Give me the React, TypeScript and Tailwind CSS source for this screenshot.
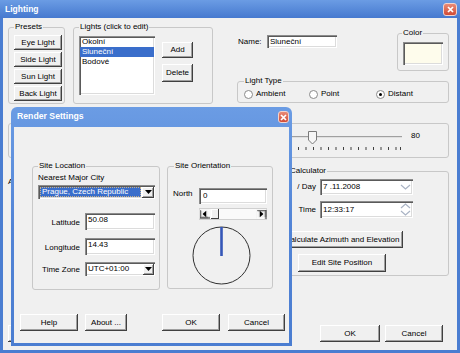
import React from "react";

const FONT = "font-['Liberation_Sans',Arial,sans-serif]";

function Btn({ children, className = "" }: { children?: React.ReactNode; className?: string }) {
  return (
    <button
      type="button"
      className={`flex shrink-0 items-center justify-center bg-[#f0f0f0] text-[8px] leading-none text-black shadow-[inset_-1px_-1px_0_#404040,inset_1px_1px_0_#ffffff,inset_-2px_-2px_0_#a0a0a0] ${className}`}
    >
      {children}
    </button>
  );
}

function Field({ children, className = "" }: { children?: React.ReactNode; className?: string }) {
  return (
    <div
      className={`shrink-0 overflow-hidden shadow-[inset_1px_1px_0_#8c8c8c,inset_2px_2px_0_#5a5a5a,inset_-1px_-1px_0_#ffffff,inset_-2px_-2px_0_#dcdcdc] ${className}`}
    >
      {children}
    </div>
  );
}

function Group({
  label,
  className = "",
  legendClass = "",
  children,
}: {
  label: string;
  className?: string;
  legendClass?: string;
  children?: React.ReactNode;
}) {
  return (
    <fieldset className={`shrink-0 rounded-[3px] border border-[#c8c8c8] ${className}`}>
      <legend className={`px-[1px] text-[8px] leading-[12px] ${legendClass}`}>{label}</legend>
      {children}
    </fieldset>
  );
}

function Close({ className = "" }: { className?: string }) {
  return (
    <div
      className={`flex items-center justify-center rounded-[3px] border border-[#f3d3cc] bg-gradient-to-b from-[#e98a76] to-[#cf4a36] ${className}`}
    >
      <svg width="7" height="7" viewBox="0 0 7 7">
        <path d="M1 1L6 6M6 1L1 6" stroke="white" strokeWidth="1.7" />
      </svg>
    </div>
  );
}

function Radio({ label, checked = false, className = "" }: { label: string; checked?: boolean; className?: string }) {
  return (
    <div className={`flex items-center ${className}`}>
      <span className="flex h-[9px] w-[9px] items-center justify-center rounded-full border border-[#8a8a8a] bg-white">
        {checked && <span className="h-[3px] w-[3px] rounded-full bg-black" />}
      </span>
      <span className="ml-[3px]">{label}</span>
    </div>
  );
}

function DropBtn({ className = "" }: { className?: string }) {
  return (
    <div
      className={`flex items-center justify-center bg-[#f0f0f0] shadow-[inset_-1px_-1px_0_#404040,inset_1px_1px_0_#ffffff,inset_-2px_-2px_0_#a0a0a0] ${className}`}
    >
      <svg width="7" height="4" viewBox="0 0 7 4">
        <path d="M0 0H7L3.5 4Z" fill="black" />
      </svg>
    </div>
  );
}

function Chevron({ up = false }: { up?: boolean }) {
  return (
    <svg width="11" height="6" viewBox="0 0 11 6">
      <path d={up ? "M1 5L5.5 1L10 5" : "M1 1L5.5 5L10 1"} stroke="#a9b3c4" strokeWidth="1.2" fill="none" />
    </svg>
  );
}

const ticks: number[] = [];
for (let x = 298 - 7.5 * 37; x < 397; x += 7.5) ticks.push(x);
ticks.push(400);

function RenderSettings() {
  return (
    <div className="absolute left-[11px] top-[107px] flex h-[239px] w-[281px] flex-col rounded-t-[6px] bg-gradient-to-b from-[#6b9ce4] via-[#5284d6] to-[#4a7dd1] px-[3px] pb-[3px]">
      <div className="flex h-[20px] items-center justify-between pl-[3px]">
        <span className="text-[8.7px] font-bold text-white">Render Settings</span>
        <Close className="h-[12px] w-[11px]" />
      </div>
      <div className="flex-1 bg-[#f0f0f0] text-[8px] text-black">
        <div className="flex items-start pl-[18px] pt-[33px]">
          <Group label="Site Location" className="h-[130px] w-[128px]" legendClass="ml-[5px]">
            <div className="pl-[5px] leading-[12px]">Nearest Major City</div>
            <Field className="ml-[5px] mt-[1px] flex h-[14px] w-[117px] items-center bg-white pl-[2px] pr-[1px]">
              <span className="h-[10px] w-[101px] border border-dotted border-[#c9b28a] bg-[#3a6ecb] pl-[1px] leading-[8px] text-white">
                Prague, Czech Republic
              </span>
              <DropBtn className="ml-[1px] h-[11px] w-[12px]" />
            </Field>
            <div className="mt-[14px] flex items-center">
              <span className="flex w-[47px] justify-end pt-[3px]">Latitude</span>
              <Field className="ml-[5px] h-[17px] w-[70px] bg-white pl-[3px] pt-[2px] leading-[10px]">50.08</Field>
            </div>
            <div className="mt-[8px] flex items-center">
              <span className="flex w-[47px] justify-end pt-[3px]">Longitude</span>
              <Field className="ml-[5px] h-[17px] w-[70px] bg-white pl-[3px] pt-[2px] leading-[10px]">14.43</Field>
            </div>
            <div className="mt-[7px] flex items-center">
              <span className="flex w-[47px] justify-end whitespace-nowrap pt-[1px]">Time Zone</span>
              <Field className="ml-[5px] flex h-[14px] w-[70px] items-center justify-between bg-white pl-[3px] pr-[1px]">
                <span className="leading-[10px]">UTC+01:00</span>
                <DropBtn className="h-[11px] w-[11px]" />
              </Field>
            </div>
          </Group>
          <Group label="Site Orientation" className="ml-[7px] h-[129px] w-[106px]" legendClass="ml-[6px]">
            <div className="mt-[16px] flex items-start">
              <span className="w-[31px] pl-[5px] pt-[1px] leading-[10px]">North</span>
              <Field className="h-[16px] w-[68px] bg-white pl-[4px] pt-[3px] leading-[10px]">0</Field>
            </div>
            <div className="ml-[31px] mt-[4px] flex h-[12px] w-[68px] items-stretch border border-[#d0d0d0] bg-[#fafafa]">
              <DropBtn className="w-[9px] rotate-90" />
              <div className="flex-1 pl-[2px]">
                <div className="h-full w-[8px] bg-[#f0f0f0] shadow-[inset_-1px_-1px_0_#404040,inset_1px_1px_0_#ffffff]" />
              </div>
              <DropBtn className="w-[9px] -rotate-90" />
            </div>
            <svg className="ml-[24px] mt-[6px]" width="59" height="59" viewBox="0 0 59 59">
              <circle cx="29.5" cy="29.5" r="28.5" fill="none" stroke="#303030" strokeWidth="1" />
              <line x1="29.5" y1="1" x2="29.5" y2="30" stroke="#3557b8" strokeWidth="2.6" />
            </svg>
          </Group>
        </div>
        <div className="mt-[24px] flex pl-[6px]">
          <Btn className="h-[17px] w-[58px]">Help</Btn>
          <Btn className="ml-[7px] h-[17px] w-[42px]">About ...</Btn>
          <Btn className="ml-[35px] h-[17px] w-[58px]">OK</Btn>
          <Btn className="ml-[8px] h-[17px] w-[57px]">Cancel</Btn>
        </div>
      </div>
    </div>
  );
}

export default function App() {
  return (
    <div className={`relative h-[353px] w-[460px] overflow-hidden bg-[#4a7dd1] ${FONT}`}>
      <div className="flex h-[18px] items-center justify-between bg-gradient-to-b from-[#6b9ce4] to-[#4679cf] pl-[5px] pr-[3px]">
        <span className="text-[8.5px] font-bold text-white">Lighting</span>
        <Close className="h-[13px] w-[14px]" />
      </div>
      <div className="mx-[3px] h-[332px] bg-[#f0f0f0] pl-[5px] pt-[3px] text-[8px] text-black">
        <div className="flex items-start">
          <Group label="Presets" className="h-[83px] w-[57px]" legendClass="ml-[5px]">
            <div className="mt-[2px] flex flex-col gap-[2px] pl-[5px]">
              <Btn className="h-[15px] w-[48px]">Eye Light</Btn>
              <Btn className="h-[15px] w-[48px]">Side Light</Btn>
              <Btn className="h-[15px] w-[48px]">Sun Light</Btn>
              <Btn className="h-[15px] w-[48px]">Back Light</Btn>
            </div>
          </Group>
          <Group label="Lights (click to edit)" className="ml-[8px] h-[83px] w-[140px]" legendClass="ml-[5px]">
            <div className="mt-[3px] flex pl-[5px]">
              <Field className="h-[59px] w-[76px] bg-white px-[1px] pt-[1px]">
                <div className="h-[10px] pl-[2px] leading-[10px]">Okolní</div>
                <div className="h-[10px] bg-[#3a6ecb] pl-[2px] leading-[10px] text-white">Sluneční</div>
                <div className="h-[10px] pl-[2px] leading-[10px]">Bodové</div>
              </Field>
              <div className="ml-[7px] mt-[6px] flex flex-col gap-[6px]">
                <Btn className="h-[16px] w-[31px]">Add</Btn>
                <Btn className="h-[18px] w-[31px]">Delete</Btn>
              </div>
            </div>
          </Group>
          <div className="ml-[24px] w-[212px] shrink-0">
            <div className="flex items-start justify-between">
              <div className="mt-[14px] flex items-center">
                <span className="w-[30px] pl-[1px]">Name:</span>
                <Field className="h-[13px] w-[70px] bg-white pl-[3px] leading-[13px]">Sluneční</Field>
              </div>
              <Group label="Color" className="mt-[6px] h-[44px] w-[52px]" legendClass="ml-[4px]">
                <Field className="ml-[5px] mt-[3px] h-[23px] w-[40px] bg-[#fefcec]" />
              </Group>
            </div>
            <Group label="Light Type" className="mt-[4px] h-[28px] w-[212px]" legendClass="ml-[6px]">
              <div className="flex h-[14px] items-center pl-[6px]">
                <Radio label="Ambient" className="w-[65px]" />
                <Radio label="Point" className="w-[67px]" />
                <Radio label="Distant" checked />
              </div>
            </Group>
          </div>
        </div>

        <div className="mt-[19px] h-[35px] w-[441px] rounded-[3px] border border-[#c8c8c8] pt-[5px]">
          <div className="flex items-start">
            <div className="relative ml-[7px] h-[24px] w-[386px]">
              <div className="mt-[7px] h-[2px] w-full border-t border-[#a0a0a0] border-b-white bg-[#e0e0e0]" />
              <svg className="mt-[9px]" width="386" height="4" viewBox="0 0 386 4">
                {ticks.map((x) => (
                  <rect key={x} x={x - 16} y="0" width="1" height="3" fill="#404040" />
                ))}
              </svg>
              <svg className="absolute left-[292px] top-[2px]" width="10" height="14" viewBox="0 0 10 14">
                <path d="M0.5 0.5H8.5V9L4.5 13L0.5 9Z" fill="#f6f6f6" stroke="#7a7a7a" strokeWidth="1" />
              </svg>
            </div>
            <span className="ml-[9px] mt-[1px] leading-[12px]">80</span>
          </div>
        </div>

        <div className="mt-[7px] flex items-start">
          <div className="mt-[11px] w-[222px] shrink-0 leading-[12px]">Azimuth</div>
          <Group label="Calculator" className="h-[111px] w-[219px]" legendClass="ml-[58px]">
            <div className="mt-[2px] flex items-center">
              <span className="flex w-[85px] justify-end gap-[8px] whitespace-nowrap">
                <span>Month</span>
                <span>/ Day</span>
              </span>
              <Field className="ml-[4px] flex h-[16px] w-[93px] items-center justify-between bg-white pl-[3px] pr-[2px]">
                <span>7 .11.2008</span>
                <Chevron />
              </Field>
            </div>
            <div className="mt-[6px] flex items-center">
              <span className="flex w-[85px] justify-end">Time</span>
              <Field className="ml-[4px] flex h-[17px] w-[93px] items-center justify-between bg-white pl-[3px] pr-[2px]">
                <span>12:33:17</span>
                <div className="flex flex-col gap-[1px]">
                  <Chevron up />
                  <Chevron />
                </div>
              </Field>
            </div>
            <div className="ml-[50px] flex w-[122px] flex-col items-center">
              <Btn className="mt-[13px] h-[17px] w-[122px] whitespace-nowrap">Calculate Azimuth and Elevation</Btn>
              <Btn className="mt-[6px] h-[18px] w-[88px]">Edit Site Position</Btn>
            </div>
          </Group>
        </div>

        <div className="mt-[49px] flex">
          <Btn className="h-[17px] w-[80px]">Settings ...</Btn>
          <Btn className="ml-auto h-[17px] w-[60px]">OK</Btn>
          <Btn className="ml-[5px] mr-[14px] h-[17px] w-[58px]">Cancel</Btn>
        </div>
      </div>
      <RenderSettings />
    </div>
  );
}
